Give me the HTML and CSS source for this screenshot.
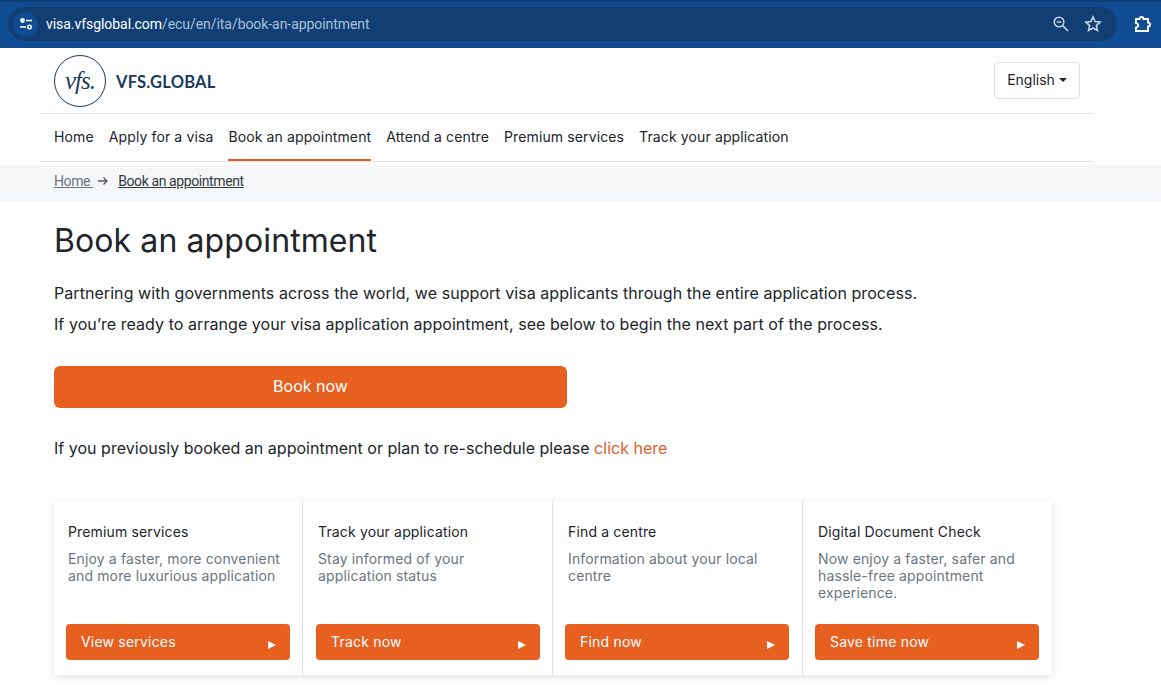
FILE: index.html
```html
<!DOCTYPE html>
<html lang="en">
<head>
  <meta charset="UTF-8">
  <meta name="viewport" content="width=device-width, initial-scale=1.0">
  <title>Book an appointment</title>
  <link rel="stylesheet" href="styles.css">
</head>
<body>
  <div class="browser-bar">
    <div class="url-pill">
      <span class="site-icon">
        <svg width="16" height="16" viewBox="0 0 16 16" fill="none" stroke="#fff" stroke-width="1.4">
          <circle cx="4.5" cy="4.5" r="1.7" fill="#fff"/>
          <path d="M8 4.5h6M2 11h6"/>
          <circle cx="11.5" cy="11" r="1.8"/>
        </svg>
      </span>
      <span class="url"><span class="url-host">visa.vfsglobal.com</span>/ecu/en/ita/book-an-appointment</span>
      <svg class="pill-icon" width="18" height="18" viewBox="0 0 18 18" fill="none" stroke="#c3d2e6" stroke-width="1.6">
        <circle cx="7" cy="7" r="4.8"/>
        <path d="M4.8 7h4.4M10.6 10.6l5.4 5.4"/>
      </svg>
      <svg class="pill-icon" width="18" height="18" viewBox="0 0 18 18" fill="none" stroke="#c3d2e6" stroke-width="1.6">
        <path d="M9 2l2.1 4.6 5 .6-3.7 3.400 1 4.900L9 13l-4.400 2.500 1-4.900L1.900 7.200l5-.6z"/>
      </svg>
    </div>
    <svg class="ext-icon" width="20" height="20" viewBox="0 0 20 20" fill="none" stroke="#fff" stroke-width="1.9">
      <path d="M3 5h3.500a2 2 0 0 1 4 0H15v3.500a2 2 0 0 1 0 4V17H3v-3.500a2.200 2.200 0 0 0 1-4.200L3 9z"/>
    </svg>
  </div>

  <header class="site-header">
    <div class="brand-row">
      <a class="brand">
        <span class="brand-ring">vfs.</span>
        <span class="brand-name">VFS.GLOBAL</span>
      </a>
      <button class="lang-btn">English<span class="caret"></span></button>
    </div>
    <nav class="main-nav">
      <a>Home</a>
      <a>Apply for a visa</a>
      <a class="active">Book an appointment</a>
      <a>Attend a centre</a>
      <a>Premium services</a>
      <a>Track your application</a>
    </nav>
  </header>

  <div class="crumbs">
    <a class="crumb-home">Home </a>
    <svg width="12" height="10" viewBox="0 0 12 10" fill="none" stroke="#555b61" stroke-width="1.3">
      <path d="M1 5h9M6.500 1.500L10 5 6.500 8.500"/>
    </svg>
    <a class="crumb-current">Book an appointment</a>
  </div>

  <main class="content">
    <h1>Book an appointment</h1>
    <p class="intro">Partnering with governments across the world, we support visa applicants through the entire application process.</p>
    <p class="intro">If you’re ready to arrange your visa application appointment, see below to begin the next part of the process.</p>
    <a class="book-btn">Book now</a>
    <p class="resched">If you previously booked an appointment or plan to re-schedule please <a>click here</a></p>

    <section class="cards">
      <div class="card">
        <h2>Premium services</h2>
        <p>Enjoy a faster, more convenient and more luxurious application</p>
        <a class="card-btn">View services<span class="tri"></span></a>
      </div>
      <div class="card">
        <h2>Track your application</h2>
        <p>Stay informed of your application status</p>
        <a class="card-btn">Track now<span class="tri"></span></a>
      </div>
      <div class="card">
        <h2>Find a centre</h2>
        <p>Information about your local centre</p>
        <a class="card-btn">Find now<span class="tri"></span></a>
      </div>
      <div class="card">
        <h2>Digital Document Check</h2>
        <p>Now enjoy a faster, safer and hassle-free appointment experience.</p>
        <a class="card-btn">Save time now<span class="tri"></span></a>
      </div>
    </section>
  </main>
</body>
</html>
```

FILE: styles.css
```css
html, body {
  height: 685px;
  overflow: hidden;
}
body {
  font-family: Inter, "Liberation Sans", sans-serif;
  margin: 0;
  padding: 0;
  background-color: #fff;
  color: #212529;
}
a {
  color: inherit;
}
.browser-bar {
  height: 48px;
  box-sizing: border-box;
  background-color: #0f4c92;
  border-top: 2px solid #0c3d75;
  display: flex;
  align-items: center;
  padding: 0 8px 2px;
}
.url-pill {
  flex: 1;
  height: 34px;
  border-radius: 17px;
  background-color: #123f73;
  display: flex;
  align-items: center;
  padding-right: 15px;
  gap: 14px;
}
.site-icon {
  width: 25px;
  height: 25px;
  margin-left: 5px;
  border-radius: 50%;
  background-color: #0f4c92;
  display: flex;
  align-items: center;
  justify-content: center;
}
.url {
  flex: 1;
  margin-left: -6px;
  font-family: Roboto, sans-serif;
  font-size: 14px;
  letter-spacing: -0.06px;
  color: #a9c0dc;
}
.url-host {
  color: #fff;
}
.ext-icon {
  margin: 0 0 0 16px;
}
.site-header {
  margin-left: 40px;
  width: 1053px;
}
.brand-row {
  height: 66px;
  box-sizing: border-box;
  border-bottom: 1px solid #dee2e6;
  display: flex;
  align-items: center;
  justify-content: space-between;
  padding: 0 13px 1px 14px;
}
.brand {
  display: flex;
  align-items: center;
  gap: 10px;
}
.brand-ring {
  width: 52px;
  height: 52px;
  margin-top: 1px;
  box-sizing: border-box;
  border: 1.5px solid #1b3a5c;
  border-radius: 50%;
  display: flex;
  align-items: center;
  justify-content: center;
  font-family: "Liberation Serif", serif;
  font-style: italic;
  font-size: 25px;
  letter-spacing: -1px;
  color: #1b3a5c;
}
.brand-name {
  margin-top: 3px;
  font-family: Lato, sans-serif;
  font-weight: 700;
  font-size: 16.5px;
  letter-spacing: 0.2px;
  color: #1b3a5c;
}
.lang-btn {
  width: 86px;
  height: 37px;
  background-color: #fff;
  border: 1px solid #dee2e6;
  border-radius: 4px;
  font-family: inherit;
  font-size: 14px;
  color: #212529;
  padding: 0 0 2px;
}
.caret {
  display: inline-block;
  margin-left: 4px;
  vertical-align: 3px;
  border-top: 4px solid #212529;
  border-left: 4px solid transparent;
  border-right: 4px solid transparent;
}
.main-nav {
  height: 48px;
  box-sizing: border-box;
  border-bottom: 1px solid #dee2e6;
  display: flex;
  gap: 15px;
  padding-left: 14px;
  font-size: 14px;
  letter-spacing: 0.12px;
}
.main-nav a {
  line-height: 46px;
  height: 47px;
  box-sizing: border-box;
}
.main-nav a.active {
  border-bottom: 2px solid #e8601f;
}
.crumbs {
  height: 36px;
  margin-top: 3px;
  background-color: #f6f7f9;
  display: flex;
  align-items: center;
  padding: 0 0 4px 54px;
  box-sizing: border-box;
  gap: 4px;
  font-family: Roboto, sans-serif;
  font-size: 14px;
  letter-spacing: -0.4px;
}
.crumbs a {
  text-decoration: underline;
  white-space: pre;
}
.crumbs svg {
  margin-right: 5px;
}
.crumb-home {
  color: #6c757d;
}
.crumb-current {
  color: #343a40;
}
.content {
  padding-left: 54px;
}
h1 {
  font-weight: 400;
  font-size: 32px;
  letter-spacing: 0.1px;
  line-height: 40px;
  margin: 20px 0 17px;
}
.intro {
  margin: 0;
  font-size: 16px;
  line-height: 31px;
  letter-spacing: 0.06px;
}
.book-btn {
  display: block;
  width: 513px;
  height: 42px;
  margin-top: 26px;
  border-radius: 6px;
  background-color: #e8601f;
  color: #fff;
  text-align: center;
  line-height: 41px;
  font-size: 16px;
}
.resched {
  margin: 28px 0 0;
  font-size: 16px;
  line-height: 24px;
  letter-spacing: 0.02px;
}
.resched a {
  color: #e0602f;
}
.cards {
  width: 998px;
  height: 174px;
  margin-top: 41px;
  display: grid;
  grid-template-columns: 248px 250px 250px 250px;
  box-shadow: 0 2px 8px rgba(0, 0, 0, 0.12);
}
.card {
  box-sizing: border-box;
  border-left: 1px solid #dee2e6;
  padding: 22px 10px 15px 15px;
  display: flex;
  flex-direction: column;
}
.card:first-child {
  border-left: none;
  padding-left: 14px;
}
.card h2 {
  margin: 0;
  font-weight: 400;
  font-size: 14px;
  letter-spacing: 0.15px;
  line-height: 18px;
}
.card p {
  margin: 9px 0 0;
  flex: 1;
  font-size: 14px;
  letter-spacing: 0.14px;
  line-height: 17px;
  color: #6c757d;
}
.card-btn {
  box-sizing: border-box;
  width: 224px;
  margin-left: -2px;
  height: 36px;
  border-radius: 4px;
  background-color: #e8601f;
  color: #fff;
  font-size: 14px;
  letter-spacing: 0.2px;
  padding: 0 14px 1px 15px;
  display: flex;
  justify-content: space-between;
  align-items: center;
}
.card:nth-child(n+3) .card-btn {
  margin-left: -3px;
}
.tri {
  margin-top: 6px;
  border-left: 8px solid #fff;
  border-top: 4px solid transparent;
  border-bottom: 4px solid transparent;
}
```
